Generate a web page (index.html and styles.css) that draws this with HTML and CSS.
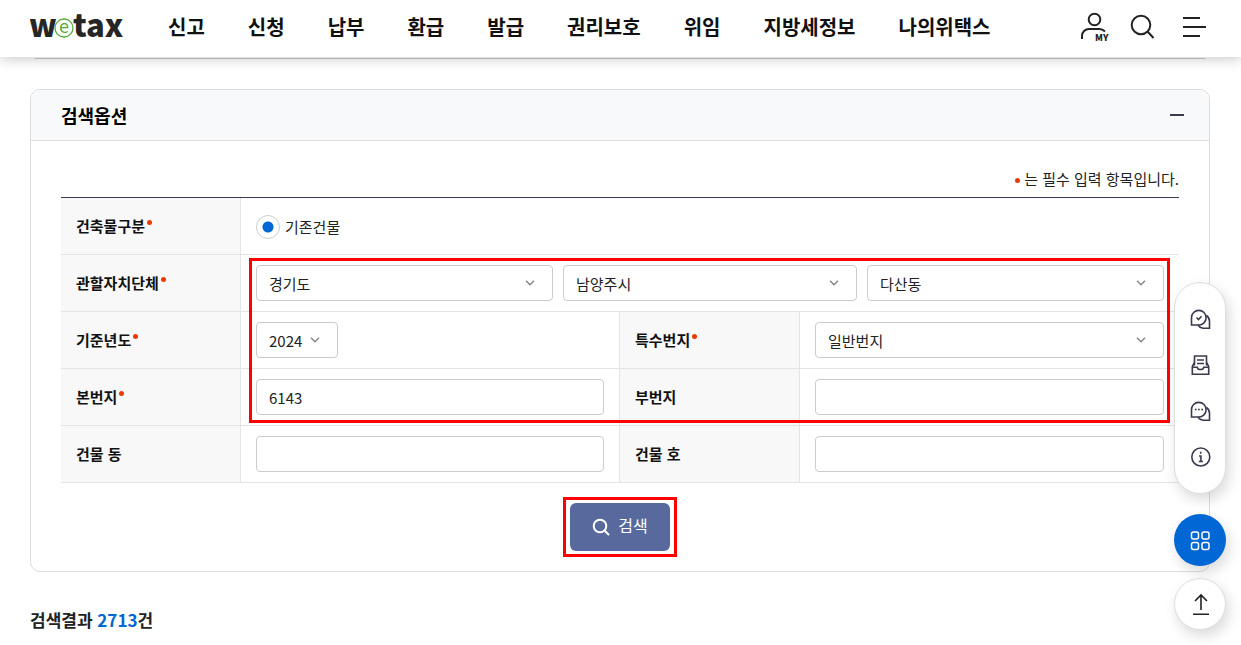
FILE: index.html
```html
<!DOCTYPE html>
<html lang="ko">
<head>
  <meta charset="UTF-8" />
  <meta name="viewport" content="width=device-width, initial-scale=1" />
  <title>wetax</title>
  <link rel="stylesheet" href="styles.css">
</head>
<body>

  <header class="header">
    <a class="logo" href="#" aria-label="wetax">
      <svg width="96" height="50" viewBox="0 0 96 50">
        <text class="logo-text" x="-1" y="35">w</text>
        <text class="logo-text" x="43" y="35">tax</text>
        <circle cx="34" cy="26" r="9" />
        <text class="logo-e" x="34" y="31">e</text>
      </svg>
    </a>
    <nav class="gnb">
      <a href="#">신고</a>
      <a href="#">신청</a>
      <a href="#">납부</a>
      <a href="#">환급</a>
      <a href="#">발급</a>
      <a href="#">권리보호</a>
      <a href="#">위임</a>
      <a href="#">지방세정보</a>
      <a href="#">나의위택스</a>
    </nav>
    <div class="util">
      <button type="button" title="MY">
        <svg width="32" height="40" viewBox="0 -4 32 40">
          <circle cx="16.500" cy="8.500" r="5.800" />
          <path d="M4 28v-3a7 7 0 0 1 7-7h10a8 8 0 0 1 6 2.500" />
          <text x="17" y="30">MY</text>
        </svg>
      </button>
      <button type="button" title="검색">
        <svg width="32" height="32" viewBox="0 0 32 32">
          <circle cx="13" cy="14" r="9.300" />
          <path d="M19.500 20.500l6 6.500" />
        </svg>
      </button>
      <button type="button" title="전체메뉴">
        <svg width="32" height="32" viewBox="0 0 32 32">
          <path d="M5 7h17M5 16h23M5 25h17" />
        </svg>
      </button>
    </div>
  </header>

  <main class="content">
    <div class="prev-box"></div>

    <section class="card">
      <div class="card-head">
        <h2>검색옵션</h2>
        <button type="button" class="fold-btn" title="접기"></button>
      </div>

      <form class="card-body">
        <p class="notice"><i class="dot"></i>는 필수 입력 항목입니다.</p>

        <div class="table-wrap">
          <table>
            <colgroup>
              <col class="col-th"><col><col class="col-th"><col>
            </colgroup>
            <tbody>
              <tr>
                <th scope="row">건축물구분<i class="dot"></i></th>
                <td colspan="3">
                  <label class="radio"><input type="radio" name="bldType" checked>기존건물</label>
                </td>
              </tr>
              <tr>
                <th scope="row"><label for="sido">관할자치단체</label><i class="dot"></i></th>
                <td colspan="3">
                  <div class="region">
                    <select id="sido"><option>경기도</option></select>
                    <select aria-label="시군구"><option>남양주시</option></select>
                    <select aria-label="읍면동"><option>다산동</option></select>
                  </div>
                </td>
              </tr>
              <tr>
                <th scope="row"><label for="year">기준년도</label><i class="dot"></i></th>
                <td><select id="year" class="year"><option>2024</option></select></td>
                <th scope="row"><label for="special">특수번지</label><i class="dot"></i></th>
                <td><select id="special"><option>일반번지</option></select></td>
              </tr>
              <tr>
                <th scope="row"><label for="bonbun">본번지</label><i class="dot"></i></th>
                <td><input type="text" id="bonbun" value="6143"></td>
                <th scope="row"><label for="bubun">부번지</label></th>
                <td><input type="text" id="bubun"></td>
              </tr>
              <tr>
                <th scope="row"><label for="dong">건물 동</label></th>
                <td><input type="text" id="dong"></td>
                <th scope="row"><label for="ho">건물 호</label></th>
                <td><input type="text" id="ho"></td>
              </tr>
            </tbody>
          </table>
          <div class="mark mark-fields"></div>
        </div>

        <div class="btn-area">
          <button type="button" class="search-btn">
            <svg width="18" height="18" viewBox="0 0 18 18">
              <circle cx="8" cy="8" r="6.300" />
              <path d="M12.500 12.500l4.500 4.500" />
            </svg>
            <span>검색</span>
          </button>
          <div class="mark mark-btn"></div>
        </div>
      </form>
    </section>

    <h3 class="result">검색결과 <em>2713</em>건</h3>
  </main>

  <aside class="quick">
    <div class="quick-menu">
      <button type="button" title="상담">
        <svg width="22" height="22" viewBox="0 0 22 22">
          <path d="M2.500 17v-7.300a7.300 7.300 0 1 1 7.300 7.300z" />
          <path d="M17.500 7.500a7 7 0 0 1 3 5.500v7.300h-6.500a7 7 0 0 1-5-3" />
          <path d="M7.500 9.500l2 2 3-3.200" />
        </svg>
      </button>
      <button type="button" title="문서함">
        <svg width="22" height="22" viewBox="0 0 22 22">
          <path d="M5.500 11.500v-9.500h12v9.500" />
          <path d="M5.500 8.500l-2.200 4v7.700h16.400v-7.700l-2.200-4" />
          <path d="M3.300 13.300h5c.5 3 5.900 3 6.400 0h5M8 6h7M8 9.500h7" />
        </svg>
      </button>
      <button type="button" title="채팅">
        <svg width="22" height="22" viewBox="0 0 22 22">
          <path d="M2.500 17v-7.300a7.300 7.300 0 1 1 7.300 7.300z" />
          <path d="M17.500 7.500a7 7 0 0 1 3 5.500v7.300h-6.500a7 7 0 0 1-5-3" />
          <path d="M5.800 9.500h1.800M9 9.500h1.800M12.200 9.500h1.800" />
        </svg>
      </button>
      <button type="button" title="안내">
        <svg width="22" height="22" viewBox="0 0 22 22">
          <circle cx="11.800" cy="11" r="9" />
          <path d="M11.700 5.800v2M10 10h1.900v5.500M9.700 15.500h4.200" />
        </svg>
      </button>
    </div>
    <button type="button" class="round-btn all" title="전체">
      <svg width="22" height="22" viewBox="0 0 22 22">
        <rect x="2.500" y="3" width="7" height="7" rx="2" />
        <rect x="13" y="3" width="7" height="7" rx="2" />
        <rect x="2.500" y="13.500" width="7" height="7" rx="2" />
        <rect x="13" y="13.500" width="7" height="7" rx="2" />
      </svg>
    </button>
    <button type="button" class="round-btn top" title="맨 위로">
      <svg width="22" height="22" viewBox="0 0 22 22">
        <path d="M12 17V2M6 8l6-6 6 6M4 21.200h16" />
      </svg>
    </button>
  </aside>

</body>
</html>
```
FILE: styles.css
```css
* {
  box-sizing: border-box;
}

body {
  margin: 0;
  background-color: #fff;
  color: #222;
  font-family: "Noto Sans CJK KR", "Noto Sans", sans-serif;
  font-size: 15px;
  line-height: 24px;
}

button {
  padding: 0;
  border: 0;
  background: none;
  font-family: inherit;
  cursor: pointer;
}

svg {
  display: block;
  fill: none;
}

/* header */
.header {
  position: sticky;
  top: 0;
  z-index: 10;
  display: flex;
  align-items: center;
  height: 57px;
  padding: 0 31px 4px 30px;
  background-color: #fff;
  box-shadow: 0 2px 12px rgba(0, 0, 0, 0.22);
}

.logo {
  margin-right: 42px;
}
.logo-text {
  fill: #262626;
  font-size: 31px;
  font-weight: 900;
}
.logo-e {
  fill: #56ab3c;
  font-size: 18px;
  text-anchor: middle;
}
.logo circle {
  fill: #fff;
  stroke: #56ab3c;
  stroke-width: 1.3;
}

.gnb {
  display: flex;
  gap: 43px;
}
.gnb a {
  color: #111;
  font-size: 20px;
  font-weight: 700;
  line-height: 30px;
  text-decoration: none;
  white-space: nowrap;
}

.util {
  display: flex;
  align-items: center;
  gap: 18px;
  margin-left: auto;
}
.util svg {
  stroke: #222;
  stroke-width: 2;
}
.util text {
  fill: #222;
  stroke: none;
  font-size: 9px;
  font-weight: 900;
}

/* content */
.content {
  padding: 0 31px 0 30px;
}

.prev-box {
  height: 2px;
  margin: 0 5px 30px;
  border-bottom: 1px solid #ccc;
}

.card {
  border: 1px solid #ddd;
  border-radius: 10px;
}

.card-head {
  display: flex;
  align-items: center;
  justify-content: space-between;
  height: 51px;
  padding: 0 25px 0 30px;
  border-bottom: 1px solid #ddd;
  border-radius: 10px 10px 0 0;
  background-color: #f8f9fb;
}
.card-head h2 {
  margin: 0;
  color: #000;
  font-size: 18px;
  font-weight: 700;
}

.fold-btn {
  width: 14px;
  height: 2px;
  background-color: #3b3a4d;
}

.card-body {
  padding: 26px 30px 20px;
}

.dot {
  display: inline-block;
  width: 5px;
  height: 5px;
  border-radius: 50%;
  background-color: #eb3a00;
}

.notice {
  margin: 0 0 6px;
  text-align: right;
}
.notice .dot {
  margin-right: 4px;
  vertical-align: 2px;
}

.table-wrap {
  position: relative;
}

table {
  width: 100%;
  border-top: 1px solid #3b3a4d;
  border-spacing: 0;
  table-layout: fixed;
}
.col-th {
  width: 180px;
}
th,
td {
  height: 57px;
  padding: 0 15px;
  border-right: 1px solid #e4e4e4;
  border-bottom: 1px solid #e4e4e4;
  text-align: left;
}
td:last-child {
  border-right: 0;
}
th {
  background-color: #f8f8f8;
  color: #111;
  font-weight: 700;
}
th .dot {
  margin-left: 2px;
  vertical-align: 7px;
}

input[type="text"],
select {
  display: block;
  width: 100%;
  height: 36px;
  margin: 0;
  padding: 0 12px;
  border: 1px solid #ccc;
  border-radius: 4px;
  background-color: #fff;
  color: #222;
  font-family: inherit;
  font-size: 15px;
}
select {
  appearance: none;
  background-image: url("data:image/svg+xml,%3Csvg xmlns='http://www.w3.org/2000/svg' width='10' height='6' fill='none' stroke='%23888' stroke-width='1.500'%3E%3Cpath d='M1 .7l4 4 4-4'/%3E%3C/svg%3E");
  background-repeat: no-repeat;
  background-position: right 17px center;
}
.year {
  width: 82px;
}

.region {
  display: grid;
  grid-template-columns: 1fr 294px 1fr;
  gap: 10px;
}

.radio {
  display: flex;
  align-items: center;
  gap: 5px;
  padding-top: 2px;
}
.radio input {
  appearance: none;
  width: 24px;
  height: 24px;
  margin: 0;
  border: 1px solid #ccc;
  border-radius: 50%;
  background: radial-gradient(circle, #0067d5 5px, #fff 6px);
}

/* red guide boxes */
.mark {
  position: absolute;
  border: 3px solid #f00;
  pointer-events: none;
}
.mark-fields {
  top: 61px;
  right: 9px;
  bottom: 60px;
  left: 188px;
}
.mark-btn {
  inset: -6px -7px;
}

.btn-area {
  position: relative;
  width: 100px;
  margin: 20px auto 0;
}
.search-btn {
  display: flex;
  align-items: center;
  justify-content: center;
  gap: 8px;
  width: 100%;
  height: 48px;
  border-radius: 6px;
  background-color: #586a9d;
  color: #fff;
  font-size: 16px;
  line-height: 24px;
}
.search-btn span {
  padding-bottom: 4px;
}
.search-btn svg {
  stroke: #fff;
  stroke-width: 2;
}

.result {
  margin: 36px 0 0;
  font-size: 17px;
  font-weight: 700;
}
.result em {
  color: #0067d5;
  font-style: normal;
}

/* floating quick menu */
.quick {
  position: fixed;
  right: 15px;
  bottom: 15px;
  z-index: 5;
  width: 52px;
}
.quick-menu {
  display: flex;
  flex-direction: column;
  align-items: center;
  gap: 24px;
  margin-bottom: 20px;
  padding: 25px 0;
  border: 1px solid #ddd;
  border-radius: 26px;
  background-color: #fff;
  box-shadow: 3px 6px 14px rgba(0, 0, 0, 0.15);
}
.quick-menu svg {
  stroke: #3b3a4d;
  stroke-width: 1.6;
}
.round-btn {
  display: flex;
  align-items: center;
  justify-content: center;
  width: 52px;
  height: 52px;
  border-radius: 50%;
  box-shadow: 3px 6px 14px rgba(0, 0, 0, 0.15);
}
.all {
  margin-bottom: 12px;
  background-color: #0067d5;
}
.all svg {
  stroke: #fff;
  stroke-width: 1.5;
}
.top {
  border: 1px solid #ddd;
  background-color: #fff;
}
.top svg {
  stroke: #222;
  stroke-width: 1.6;
}
```
